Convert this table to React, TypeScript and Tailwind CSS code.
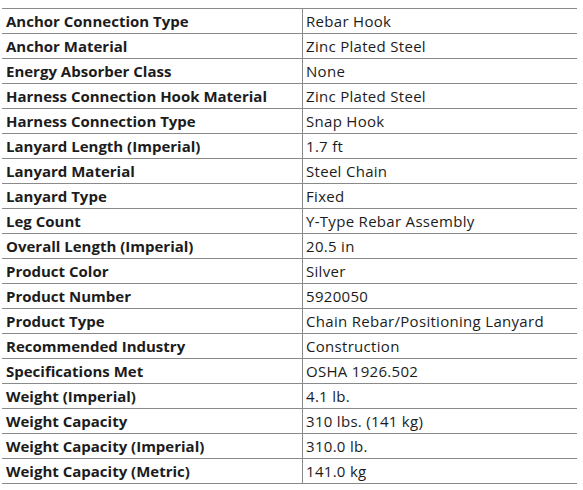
const rows: [string, string][] = [
  ["Anchor Connection Type", "Rebar Hook"],
  ["Anchor Material", "Zinc Plated Steel"],
  ["Energy Absorber Class", "None"],
  ["Harness Connection Hook Material", "Zinc Plated Steel"],
  ["Harness Connection Type", "Snap Hook"],
  ["Lanyard Length (Imperial)", "1.7 ft"],
  ["Lanyard Material", "Steel Chain"],
  ["Lanyard Type", "Fixed"],
  ["Leg Count", "Y-Type Rebar Assembly"],
  ["Overall Length (Imperial)", "20.5 in"],
  ["Product Color", "Silver"],
  ["Product Number", "5920050"],
  ["Product Type", "Chain Rebar/Positioning Lanyard"],
  ["Recommended Industry", "Construction"],
  ["Specifications Met", "OSHA 1926.502"],
  ["Weight (Imperial)", "4.1 lb."],
  ["Weight Capacity", "310 lbs. (141 kg)"],
  ["Weight Capacity (Imperial)", "310.0 lb."],
  ["Weight Capacity (Metric)", "141.0 kg"],
];

export default function App() {
  return (
    <div className="w-[583px] h-[490px] bg-white pt-[8px] pl-[2px]">
      <div className="w-[575px] border-t border-[#8a8a8a] text-[#1c1c1c] font-['Open_Sans',sans-serif] text-[15px]">
        {rows.map(([label, value]) => (
          <div key={label} className="flex h-[25px] border-b border-[#8a8a8a]">
            <div className="w-[301px] border-r border-[#8a8a8a] pl-[4px] flex items-center font-bold">
              {label}
            </div>
            <div className="flex-1 pl-[3px] flex items-center tracking-[0.3px]">{value}</div>
          </div>
        ))}
      </div>
    </div>
  );
}
